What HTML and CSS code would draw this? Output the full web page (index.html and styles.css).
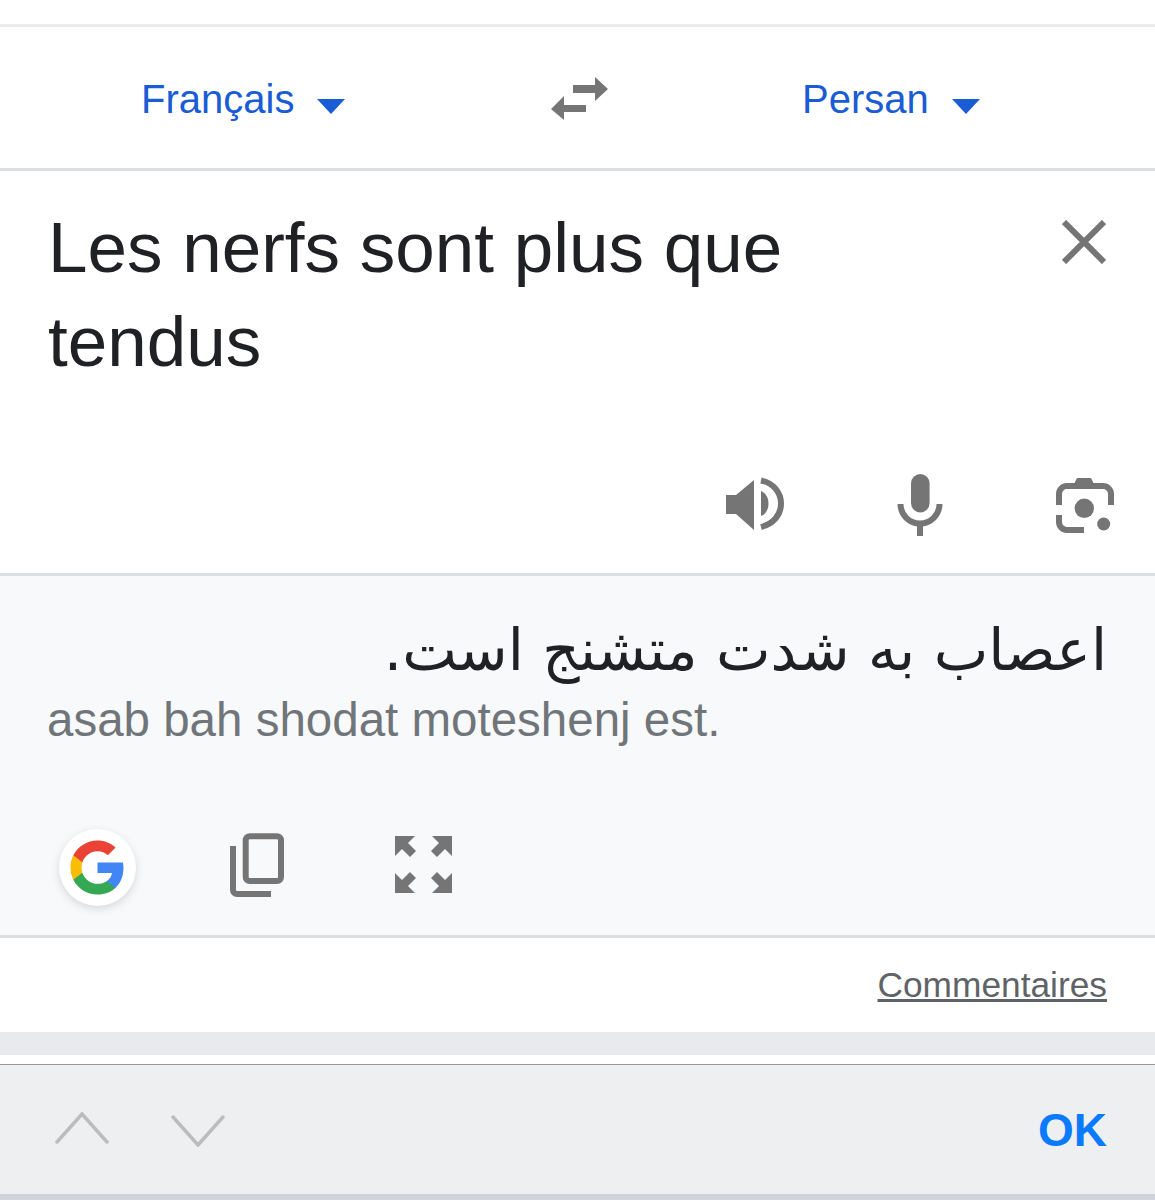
FILE: index.html
```html
<!DOCTYPE html>
<html lang="fr">
  <head>
    <meta charset="UTF-8" />
    <meta name="viewport" content="width=device-width, initial-scale=1.0" />
    <title>Traduction</title>
    <link rel="stylesheet" href="styles.css">
  </head>
  <body>
    <div class="top-gap"></div>

    <div class="lang-bar">
      <button class="lang-button lang-source">Français <span class="caret"></span></button>
      <svg class="swap-icon" viewBox="0 0 57 44" width="57" height="44">
        <path d="M22 8H44V0L57 12L44 24V16H22Z" />
        <path d="M35 28H13V19L0 32L13 43V35H35Z" />
      </svg>
      <button class="lang-button lang-target">Persan <span class="caret"></span></button>
    </div>

    <section class="source-panel">
      <div class="source-row">
        <p class="source-text">Les nerfs sont plus que tendus</p>
        <svg class="close-icon" viewBox="0 0 44 44" width="44" height="44">
          <path d="M2 2L42 42M42 2L2 42" />
        </svg>
      </div>
      <div class="source-actions">
        <svg class="speaker-icon" viewBox="0 0 60 56" width="60" height="56">
          <path d="M1 18H11L29 3V53L11 37H1Z" />
          <path d="M36 14C41 16 43.5 21 43.5 26.5C43.5 32 41 37 36 39Z" />
          <path class="stroke" d="M36 3.5C48 6 56 15 56 26.5C56 38 48 47 36 50" />
        </svg>
        <svg class="mic-icon" viewBox="0 0 48 62" width="48" height="62">
          <rect x="15" y="0" width="18.6" height="38.4" rx="9.3" />
          <path class="stroke" d="M4.5 30A19.5 19.5 0 0 0 43.5 30" />
          <rect x="21" y="50" width="6" height="12" />
        </svg>
        <svg class="lens-icon" viewBox="0 0 58 56" width="58" height="56">
          <path d="M17 9L21 1H35L39 9Z" />
          <path class="stroke" d="M3 28V17A8 8 0 0 1 11 9H47A8 8 0 0 1 55 17V28" />
          <path class="stroke" d="M3 38V45A8 8 0 0 0 11 53H28" />
          <circle cx="28.3" cy="31.3" r="9.7" />
          <circle cx="47.7" cy="47" r="6.5" />
        </svg>
      </div>
    </section>

    <section class="result-panel">
      <p class="result-text" dir="rtl" lang="fa">اعصاب به شدت متشنج است.</p>
      <p class="result-roman">asab bah shodat moteshenj est.</p>
      <div class="result-actions">
        <div class="google-badge">
          <svg viewBox="0 0 48 48" width="59" height="59">
            <path fill="#4285f4" d="M45.12 24.5c0-1.56-.14-3.06-.4-4.5H24v8.51h11.84c-.51 2.75-2.06 5.08-4.39 6.64v5.52h7.11c4.16-3.83 6.56-9.47 6.56-16.17z" />
            <path fill="#34a853" d="M24 46c5.94 0 10.92-1.97 14.56-5.33l-7.11-5.52c-1.97 1.32-4.49 2.1-7.45 2.1-5.73 0-10.58-3.87-12.31-9.07H4.34v5.7C7.96 41.07 15.4 46 24 46z" />
            <path fill="#fbbc05" d="M11.69 28.18C11.25 26.86 11 25.45 11 24s.25-2.86.69-4.18v-5.7H4.34C2.85 17.09 2 20.45 2 24c0 3.55.85 6.91 2.34 9.88l7.35-5.7z" />
            <path fill="#ea4335" d="M24 10.75c3.23 0 6.13 1.11 8.41 3.29l6.31-6.31C34.91 4.18 29.93 2 24 2 15.4 2 7.96 6.93 4.34 14.12l7.35 5.7c1.73-5.2 6.58-9.07 12.31-9.07z" />
          </svg>
        </div>
        <svg class="copy-icon" viewBox="0 0 55 64" width="55" height="64">
          <rect class="stroke" x="15.7" y="3.3" width="35.3" height="44.7" rx="4" />
          <path class="stroke" d="M3 13V57A4 4 0 0 0 7 61H41" />
        </svg>
        <svg class="expand-icon" viewBox="0 0 57 57" width="57" height="57">
          <path d="M0 0H20L13 7L21 15L15 21L7 13L0 20Z" />
          <path d="M57 0H37L44 7L36 15L42 21L50 13L57 20Z" />
          <path d="M0 57H20L13 50L21 42L15 36L7 44L0 37Z" />
          <path d="M57 57H37L44 50L36 42L42 36L50 44L57 37Z" />
        </svg>
      </div>
    </section>

    <div class="feedback-row">
      <a href="#" class="feedback-link">Commentaires</a>
    </div>
    <div class="grey-band"></div>
    <div class="white-gap"></div>

    <footer class="keyboard-bar">
      <div class="nav-arrows">
        <svg class="arrow-up" viewBox="0 0 54 32" width="54" height="32"><path d="M2 30L27 2L52 30" /></svg>
        <svg class="arrow-down" viewBox="0 0 54 32" width="54" height="32"><path d="M2 2L27 30L52 2" /></svg>
      </div>
      <span class="ok-button">OK</span>
    </footer>
    <div class="keyboard-edge"></div>
  </body>
</html>
```

FILE: styles.css
```css
* {
  margin: 0;
  padding: 0;
  box-sizing: border-box;
  font-family: "Liberation Sans", Arial, sans-serif;
}

body {
  background-color: white;
  height: 1200px;
  overflow: hidden;
}

svg {
  display: block;
  fill: #757575;
}

svg .stroke {
  fill: none;
  stroke: #757575;
  stroke-width: 6;
}

.top-gap {
  height: 27px;
  border-bottom: 3px solid #e9ebed;
}

.lang-bar {
  height: 144px;
  padding-top: 3px;
  display: flex;
  align-items: center;
  border-bottom: 3px solid #dcdfe1;
}

.lang-button {
  display: flex;
  align-items: center;
  background: none;
  border: none;
  color: #1a5bd6;
  font-size: 40px;
  white-space: nowrap;
}

.lang-source {
  width: 551px;
  padding-left: 141px;
}

.lang-target {
  margin-left: 194px;
}

.caret {
  width: 0;
  height: 0;
  margin-left: 23px;
  margin-top: 14px;
  border-left: 14.5px solid transparent;
  border-right: 14.5px solid transparent;
  border-top: 15px solid #1a5bd6;
}

.source-panel {
  height: 405px;
  border-bottom: 3px solid #dcdfe1;
  padding: 30px 49px 0 48px;
}

.source-row {
  display: flex;
  justify-content: space-between;
  height: 273px;
}

.source-text {
  width: 800px;
  font-size: 71px;
  line-height: 94px;
  color: #202124;
}

.close-icon {
  margin-top: 19px;
  flex-shrink: 0;
}

.close-icon path {
  fill: none;
  stroke: #757575;
  stroke-width: 6;
}

.source-actions {
  display: flex;
  justify-content: flex-end;
  align-items: center;
  margin-right: -8px;
}

.speaker-icon {
  margin-right: 111px;
}

.mic-icon {
  margin-right: 112px;
}

.result-panel {
  height: 362px;
  background-color: #f8f9fa;
  border-bottom: 3px solid #dcdfe1;
  padding: 34px 48px 0 47px;
}

.result-text {
  font-family: "DejaVu Sans", sans-serif;
  font-size: 58px;
  line-height: 80px;
  color: #202124;
}

.result-roman {
  font-size: 47.5px;
  line-height: 60px;
  color: #70757a;
}

.result-actions {
  display: flex;
  align-items: center;
  margin-top: 79px;
}

.google-badge {
  width: 77px;
  height: 77px;
  margin-left: 12px;
  margin-right: 94px;
  border-radius: 50%;
  background-color: white;
  box-shadow: 0 3px 9px rgba(60, 64, 67, 0.18);
  display: flex;
  align-items: center;
  justify-content: center;
}

.copy-icon {
  margin-right: 110px;
  margin-bottom: 6px;
}

.expand-icon {
  margin-bottom: 6px;
}

.feedback-row {
  height: 94px;
  padding: 27px 48px 0 0;
  text-align: right;
}

.feedback-link {
  color: #5f6368;
  font-size: 35.3px;
}

.grey-band {
  height: 23px;
  background-color: #e8eaed;
}

.white-gap {
  height: 10px;
  border-bottom: 1px solid #9a9a9c;
}

.keyboard-bar {
  height: 129px;
  background-color: #eeeff1;
  padding: 0 48px 0 55px;
  display: flex;
  justify-content: space-between;
  align-items: center;
}

.nav-arrows {
  display: flex;
  gap: 62px;
}

.arrow-up {
  margin-bottom: 3px;
}

.arrow-down {
  margin-top: 3px;
}

.nav-arrows path {
  fill: none;
  stroke: #bcbcbe;
  stroke-width: 3.5;
  stroke-linecap: round;
}

.ok-button {
  color: #0a7aff;
  font-size: 46px;
  font-weight: bold;
}

.keyboard-edge {
  height: 10px;
  background-color: #d0d3da;
}
```
